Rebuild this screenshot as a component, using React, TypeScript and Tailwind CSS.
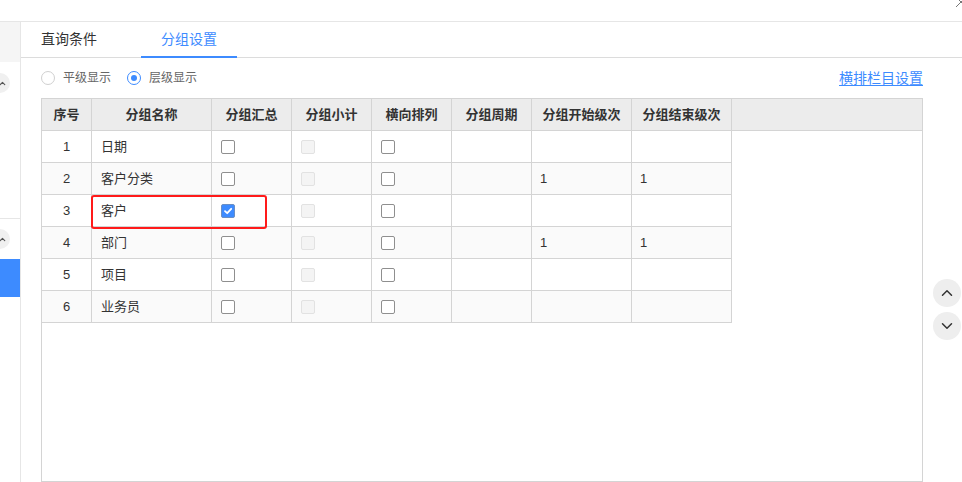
import React from 'react';
import { ChevronUp, ChevronDown } from 'lucide-react';

const font = { fontFamily: '"Liberation Sans", "Noto Sans CJK SC", sans-serif' };

const columns = [
  { name: '序号', w: 'w-[50px]' },
  { name: '分组名称', w: 'w-[120px]' },
  { name: '分组汇总', w: 'w-[80px]' },
  { name: '分组小计', w: 'w-[80px]' },
  { name: '横向排列', w: 'w-[80px]' },
  { name: '分组周期', w: 'w-[80px]' },
  { name: '分组开始级次', w: 'w-[100px]' },
  { name: '分组结束级次', w: 'w-[100px]' },
];

const rows = [
  { no: 1, name: '日期', sum: false, start: '', end: '' },
  { no: 2, name: '客户分类', sum: false, start: '1', end: '1' },
  { no: 3, name: '客户', sum: true, start: '', end: '' },
  { no: 4, name: '部门', sum: false, start: '1', end: '1' },
  { no: 5, name: '项目', sum: false, start: '', end: '' },
  { no: 6, name: '业务员', sum: false, start: '', end: '' },
];

const Checkbox: React.FC<{ checked?: boolean; disabled?: boolean }> = ({ checked, disabled }) => {
  if (checked) {
    return (
      <span className="w-[14px] h-[14px] rounded-[2px] bg-[#3d8bff] border border-[#6a8fc4] flex items-center justify-center">
        <svg width="10" height="10" viewBox="0 0 10 10">
          <path d="M2 5.2 L4.2 7.2 L8.2 2.8" fill="none" stroke="#fff" strokeWidth="1.8" strokeLinecap="round" strokeLinejoin="round" />
        </svg>
      </span>
    );
  }
  return (
    <span
      className={
        disabled
          ? 'w-[14px] h-[14px] rounded-[2px] border border-[#e2e2e2] bg-[#f4f4f4]'
          : 'w-[14px] h-[14px] rounded-[2px] border border-[#8f8f8f] bg-white'
      }
    />
  );
};

const Radio: React.FC<{ checked?: boolean; label: string }> = ({ checked, label }) => (
  <div className="flex items-center">
    <span
      className={
        checked
          ? 'w-[14px] h-[14px] rounded-full border border-[#3d8bff] flex items-center justify-center'
          : 'w-[14px] h-[14px] rounded-full border border-[#d0d0d0]'
      }
    >
      {checked && <span className="w-[6px] h-[6px] rounded-full bg-[#3d8bff]" />}
    </span>
    <span className="ml-2 text-[12px] text-[#666]">{label}</span>
  </div>
);

export default function App() {
  return (
    <div className="h-screen w-full overflow-hidden bg-white flex flex-col text-[#333]" style={font}>
      {/* top bar */}
      <div className="h-[22px] shrink-0 border-b border-[#e6e6e6] relative">
        <svg className="absolute right-[-5px] top-[-4px]" width="12" height="12" viewBox="0 0 12 12">
          <path d="M1 1 L11 11 M11 1 L1 11" stroke="#777" strokeWidth="1" fill="none" />
        </svg>
      </div>

      <div className="flex flex-1 min-h-0">
        {/* left strip */}
        <div className="w-[21px] shrink-0 border-r border-[#e6e6e6] flex flex-col overflow-hidden">
          <div className="h-10 bg-[#f5f5f5]" />
          <div className="h-[156px] pt-[11px]">
            <div className="w-5 h-5 -ml-[10px] rounded-full bg-[#f0f0f0] flex items-center justify-end pr-[3px]">
              <ChevronUp className="w-[9px] h-[9px] text-[#555]" strokeWidth={3} />
            </div>
          </div>
          <div className="border-t border-[#e6e6e6] pt-[10px] h-[41px]">
            <div className="w-5 h-5 -ml-[10px] rounded-full bg-[#f0f0f0] flex items-center justify-end pr-[3px]">
              <ChevronUp className="w-[9px] h-[9px] text-[#555]" strokeWidth={3} />
            </div>
          </div>
          <div className="h-[38px] bg-[#3d8bff]" />
        </div>

        {/* main */}
        <div className="flex-1 flex flex-col min-w-0">
          {/* tabs */}
          <div className="h-[36px] shrink-0 border-b border-[#dcdcdc] flex items-stretch">
            <div className="px-5 flex items-center text-[14px] text-[#333]">直询条件</div>
            <div className="ml-6 px-5 flex items-center text-[14px] text-[#3d8bff] relative">
              分组设置
              <span className="absolute left-0 right-0 bottom-[-1px] h-[2px] bg-[#3d8bff]" />
            </div>
          </div>

          <div className="flex flex-1 min-h-0">
            <div className="ml-5 w-[882px] shrink-0 flex flex-col">
              {/* options row */}
              <div className="mt-3 h-4 flex items-center">
                <Radio label="平级显示" />
                <div className="ml-4">
                  <Radio checked label="层级显示" />
                </div>
                <a className="ml-auto text-[14px] text-[#3d8bff] underline underline-offset-2 cursor-pointer">
                  横排栏目设置
                </a>
              </div>

              {/* table */}
              <div className="mt-3 flex-1 border border-[#d4d4d4] relative">
                <div className="h-8 flex bg-[#ececec] border-b border-[#d4d4d4]">
                  {columns.map((c) => (
                    <div
                      key={c.name}
                      className={`${c.w} shrink-0 border-r border-[#d4d4d4] flex items-center justify-center text-[13px] font-bold text-[#333]`}
                    >
                      {c.name}
                    </div>
                  ))}
                </div>
                {rows.map((r) => (
                  <div
                    key={r.no}
                    className={`w-[690px] h-8 flex border-b border-[#d4d4d4] text-[13px] ${
                      r.no % 2 === 0 ? 'bg-[#fafafa]' : 'bg-white'
                    }`}
                  >
                    <div className="w-[50px] border-r border-[#d4d4d4] flex items-center justify-center">{r.no}</div>
                    <div className="w-[120px] border-r border-[#d4d4d4] flex items-center pl-[9px]">{r.name}</div>
                    <div className="w-[80px] border-r border-[#d4d4d4] flex items-center pl-[9px]">
                      <Checkbox checked={r.sum} />
                    </div>
                    <div className="w-[80px] border-r border-[#d4d4d4] flex items-center pl-[9px]">
                      <Checkbox disabled />
                    </div>
                    <div className="w-[80px] border-r border-[#d4d4d4] flex items-center pl-[9px]">
                      <Checkbox />
                    </div>
                    <div className="w-[80px] border-r border-[#d4d4d4]" />
                    <div className="w-[100px] border-r border-[#d4d4d4] flex items-center pl-[8px]">{r.start}</div>
                    <div className="w-[100px] border-r border-[#d4d4d4] flex items-center pl-[8px]">{r.end}</div>
                  </div>
                ))}
                {/* highlight box */}
                <div className="absolute left-[49px] top-[96px] w-[176px] h-[34px] border-2 border-[#ff1a1a] rounded-[3px] pointer-events-none" />
              </div>
            </div>

            {/* right controls */}
            <div className="flex-1 pl-[10px] pt-[221px] flex flex-col gap-[5px]">
              <div className="w-7 h-7 rounded-full bg-[#eeeeee] flex items-center justify-center">
                <ChevronUp className="w-[18px] h-[18px] text-[#333]" strokeWidth={2} />
              </div>
              <div className="w-7 h-7 rounded-full bg-[#eeeeee] flex items-center justify-center">
                <ChevronDown className="w-[18px] h-[18px] text-[#333]" strokeWidth={2} />
              </div>
            </div>
          </div>
        </div>
      </div>
    </div>
  );
}
